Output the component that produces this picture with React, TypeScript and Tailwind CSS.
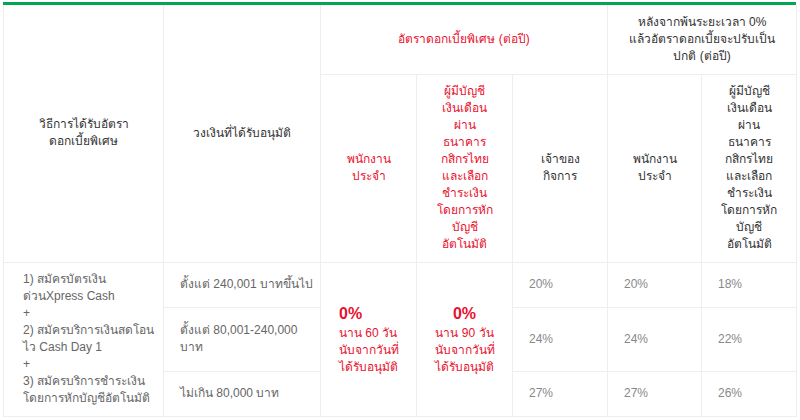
const rows = [
  { limit: ['ตั้งแต่ 240,001 บาทขึ้นไป'], owner: '20%', afterEmp: '20%', afterAcc: '18%', h: 'h-[45px]' },
  { limit: ['ตั้งแต่ 80,001-240,000', 'บาท'], owner: '24%', afterEmp: '24%', afterAcc: '22%', h: 'h-[64px]' },
  { limit: ['ไม่เกิน 80,000 บาท'], owner: '27%', afterEmp: '27%', afterAcc: '26%', h: 'h-[45px]' },
];

const cell = 'border border-[#eeeeee] align-middle whitespace-nowrap p-0';

const steps = [
  '1) สมัครบัตรเงิน',
  'ด่วนXpress Cash',
  '+',
  '2) สมัครบริการเงินสดโอน',
  'ไว Cash Day 1',
  '+',
  '3) สมัครบริการชำระเงิน',
  'โดยการหักบัญชีอัตโนมัติ',
];

const accountLines = [
  'ผู้มีบัญชี',
  'เงินเดือน',
  'ผ่าน',
  'ธนาคาร',
  'กสิกรไทย',
  'และเลือก',
  'ชำระเงิน',
  'โดยการหัก',
  'บัญชี',
  'อัตโนมัติ',
];

function Lines({ items }: { items: string[] }) {
  return (
    <>
      {items.map((t, i) => (
        <div key={i}>{t}</div>
      ))}
    </>
  );
}

export default function App() {
  return (
    <div className="w-[800px] h-[420px] overflow-hidden bg-white pt-[2px] pl-[3px] font-['Liberation_Sans',sans-serif] text-[12px] leading-[17px]">
      <div className="w-[793px] border-t-[3px] border-[#00a650]">
        <table className="w-[793px] table-fixed border-collapse">
          <colgroup>
            <col className="w-[160px]" />
            <col className="w-[157px]" />
            <col className="w-[96px]" />
            <col className="w-[96px]" />
            <col className="w-[95px]" />
            <col className="w-[94px]" />
            <col className="w-[95px]" />
          </colgroup>
          <thead className="text-[#333333] text-center">
            <tr className="h-[69px]">
              <th rowSpan={2} className={`${cell} border-t-0 font-normal`}>
                <Lines items={['วิธีการได้รับอัตรา', 'ดอกเบี้ยพิเศษ']} />
              </th>
              <th rowSpan={2} className={`${cell} border-t-0 font-normal`}>
                วงเงินที่ได้รับอนุมัติ
              </th>
              <th colSpan={3} className={`${cell} border-t-0 font-normal text-[#e8112d]`}>
                อัตราดอกเบี้ยพิเศษ (ต่อปี)
              </th>
              <th colSpan={2} className={`${cell} border-t-0 font-normal`}>
                <Lines items={['หลังจากพ้นระยะเวลา 0%', 'แล้วอัตราดอกเบี้ยจะปรับเป็น', 'ปกติ (ต่อปี)']} />
              </th>
            </tr>
            <tr className="h-[188px]">
              <th className={`${cell} font-normal text-[#e8112d]`}>
                <Lines items={['พนักงาน', 'ประจำ']} />
              </th>
              <th className={`${cell} font-normal text-[#e8112d]`}>
                <Lines items={accountLines} />
              </th>
              <th className={`${cell} font-normal`}>
                <Lines items={['เจ้าของ', 'กิจการ']} />
              </th>
              <th className={`${cell} font-normal`}>
                <Lines items={['พนักงาน', 'ประจำ']} />
              </th>
              <th className={`${cell} font-normal`}>
                <Lines items={accountLines} />
              </th>
            </tr>
          </thead>
          <tbody className="text-[#666666]">
            {rows.map((r, i) => (
              <tr key={r.owner + i} className={r.h}>
                {i === 0 && (
                  <td rowSpan={3} className={`${cell} pl-[19px]`}>
                    <Lines items={steps} />
                  </td>
                )}
                <td className={`${cell} pl-4`}>
                  <Lines items={r.limit} />
                </td>
                {i === 0 && (
                  <td rowSpan={3} className={`${cell} pl-[18px] text-[#e8112d]`}>
                    <div className="text-[16px] leading-[22px] font-bold">0%</div>
                    <Lines items={['นาน 60 วัน', 'นับจากวันที่', 'ได้รับอนุมัติ']} />
                  </td>
                )}
                {i === 0 && (
                  <td rowSpan={3} className={`${cell} text-center text-[#e8112d]`}>
                    <div className="text-[16px] leading-[22px] font-bold">0%</div>
                    <Lines items={['นาน 90 วัน', 'นับจากวันที่', 'ได้รับอนุมัติ']} />
                  </td>
                )}
                <td className={`${cell} pl-4 text-[#888888]`}>{r.owner}</td>
                <td className={`${cell} pl-4 text-[#888888]`}>{r.afterEmp}</td>
                <td className={`${cell} pl-4 text-[#888888]`}>{r.afterAcc}</td>
              </tr>
            ))}
          </tbody>
        </table>
      </div>
    </div>
  );
}
